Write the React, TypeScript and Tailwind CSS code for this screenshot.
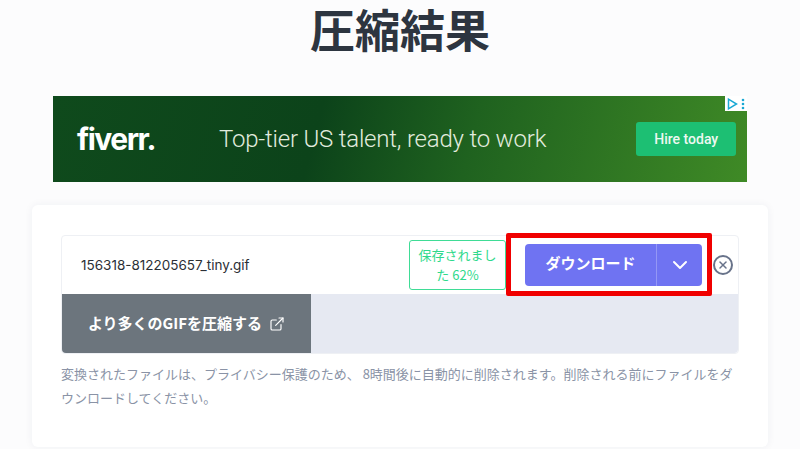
import { ChevronDown, ExternalLink, X } from "lucide-react";

const jp = "font-['Noto_Sans_CJK_JP','Noto_Sans',sans-serif]";

function AdBanner() {
  return (
    <div className="relative mx-[53px] mt-[41px] flex h-[86px] items-center bg-[linear-gradient(105deg,#0f4a1c_0%,#0c431a_38%,#1f621f_60%,#3f8a26_100%)] pl-[24px]">
      <span className="w-[142px] font-['Inter',sans-serif] text-[30px] font-bold leading-none tracking-[-1.5px] text-white">
        fiverr.
      </span>
      <span className="font-['Roboto',sans-serif] text-[24px] font-light tracking-[-0.2px] text-[#e2ecdf]">
        Top-tier US talent, ready to work
      </span>
      <span className="ml-[90px] flex h-[34px] w-[100px] items-center justify-center rounded-[3px] bg-[#1dbf73] font-['Roboto',sans-serif] text-[14px] font-medium text-[#eef8f1]">
        Hire today
      </span>
      <div className="absolute right-0 top-0 flex h-[15px] w-[22px] items-center justify-between bg-white px-[2px]">
        <svg width="11" height="12" viewBox="0 0 11 12" fill="none">
          <path d="M1.5 1.2v9.6L9.5 6z" stroke="#19a8d4" strokeWidth="1.5" />
        </svg>
        <svg width="4" height="12" viewBox="0 0 4 12" fill="#19a8d4">
          <circle cx="2" cy="2" r="1.3" />
          <circle cx="2" cy="6" r="1.3" />
          <circle cx="2" cy="10" r="1.3" />
        </svg>
      </div>
    </div>
  );
}

function ResultRow() {
  return (
    <div className="relative overflow-visible rounded-[4px] border border-[#eef0f4] bg-white">
      <div className="flex h-[58px] items-center">
        <span className="ml-[19px] w-[328px] font-['Inter',sans-serif] text-[13.5px] text-[#2b2f36]">
          156318-812205657_tiny.gif
        </span>
        <span className="flex h-[50px] w-[97px] items-center justify-center rounded-[3px] border border-[#3fdc96] px-[4px] text-center text-[13px] leading-[20px] text-[#2fd98c]">
          保存されました 62%
        </span>
        <div className="ml-[19px] flex h-[42px] w-[177px] rounded-[4px] bg-[#6f73f2] text-white">
          <span className="flex flex-1 items-center justify-center border-r border-[#9497f5] pb-[3px] text-[15px] font-bold">
            ダウンロード
          </span>
          <span className="flex w-[45px] items-center justify-center">
            <ChevronDown size={24} strokeWidth={2} />
          </span>
        </div>
        <span className="ml-[11px] flex h-[20px] w-[20px] items-center justify-center rounded-full border-2 border-[#68738a] text-[#68738a]">
          <X size={12} strokeWidth={3} />
        </span>
      </div>
      <div className="flex h-[59px] overflow-hidden rounded-b-[4px] bg-[#e6e9f2]">
        <div className="flex w-[249px] items-center justify-center gap-[7px] bg-[#6c757d] text-[15px] font-bold text-white">
          <span>より多くのGIFを圧縮する</span>
          <ExternalLink size={16} strokeWidth={1.75} />
        </div>
      </div>
      {/* red annotation drawn over the screenshot */}
      <div className="absolute left-[444px] top-[-3px] h-[63px] w-[206px] rounded-[2px] border-[5px] border-[#f00000]" />
    </div>
  );
}

export default function App() {
  return (
    <div className={`h-[449px] w-[800px] overflow-hidden bg-[#fcfcfd] ${jp}`}>
      <h1 className="mt-[3px] h-[52px] text-center text-[45px] font-bold leading-[52px] text-[#2d3540]">
        圧縮結果
      </h1>
      <AdBanner />
      <div className="mx-[32px] mt-[23px] h-[242px] rounded-[6px] bg-white px-[29px] pt-[30px] shadow-[0_0_8px_rgba(40,50,80,0.06)]">
        <ResultRow />
        <p className="mt-[8px] text-[13px] leading-[24px] text-[#8a93a6]">
          変換されたファイルは、プライバシー保護のため、 8時間後に自動的に削除されます。削除される前にファイルをダウンロードしてください。
        </p>
      </div>
    </div>
  );
}
